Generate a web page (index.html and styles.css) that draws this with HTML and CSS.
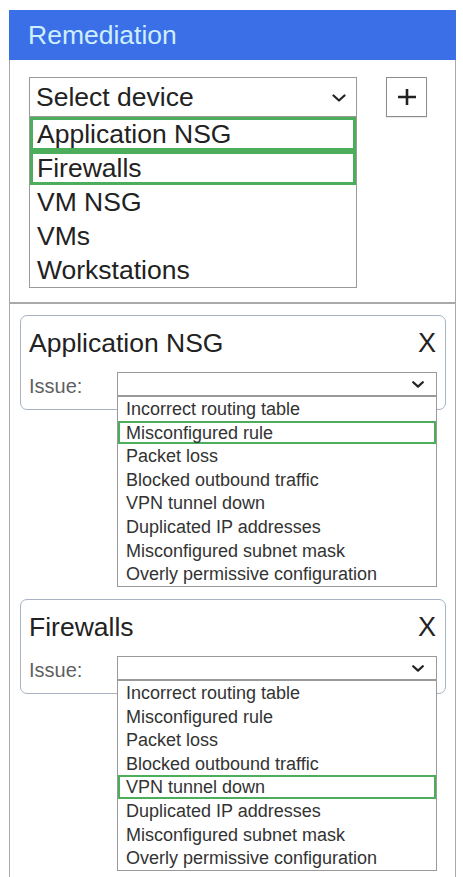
FILE: index.html
```html
<!DOCTYPE html>
<html>
<head>
<meta charset="utf-8">
<link rel="stylesheet" href="styles.css">
</head>
<body>
<div class="panel">
  <div class="header">Remediation</div>
  <div class="top">
    <div class="device">
      <div class="select-big">
        <span>Select device</span>
        <svg class="chev-big" width="14" height="8" viewBox="0 0 14 8"><path d="M1.5 1.5 L7 6.5 L12.5 1.5" fill="none" stroke="#222" stroke-width="2.2" stroke-linecap="round" stroke-linejoin="round"/></svg>
      </div>
      <ul class="listbox">
        <li class="hl">Application NSG</li>
        <li class="hl">Firewalls</li>
        <li>VM NSG</li>
        <li>VMs</li>
        <li>Workstations</li>
      </ul>
    </div>
    <div class="plus">
      <svg width="20" height="18" viewBox="0 0 20 18"><path d="M10 1 V17 M1 9 H19" fill="none" stroke="#222" stroke-width="2.6"/></svg>
    </div>
  </div>
  <div class="sep"></div>

  <div class="card">
    <div class="card-title"><span>Application NSG</span><span class="x">X</span></div>
    <div class="issue-row">
      <span class="label">Issue:</span>
      <div class="issue-select">
        <svg class="chev" width="12" height="7" viewBox="0 0 12 7"><path d="M1.2 1.2 L6 5.6 L10.8 1.2" fill="none" stroke="#222" stroke-width="2.2" stroke-linecap="round" stroke-linejoin="round"/></svg>
        <ul class="menu">
          <li>Incorrect routing table</li>
          <li class="hl">Misconfigured rule</li>
          <li>Packet loss</li>
          <li>Blocked outbound traffic</li>
          <li>VPN tunnel down</li>
          <li>Duplicated IP addresses</li>
          <li>Misconfigured subnet mask</li>
          <li>Overly permissive configuration</li>
        </ul>
      </div>
    </div>
  </div>

  <div class="card">
    <div class="card-title"><span>Firewalls</span><span class="x">X</span></div>
    <div class="issue-row">
      <span class="label">Issue:</span>
      <div class="issue-select">
        <svg class="chev" width="12" height="7" viewBox="0 0 12 7"><path d="M1.2 1.2 L6 5.6 L10.8 1.2" fill="none" stroke="#222" stroke-width="2.2" stroke-linecap="round" stroke-linejoin="round"/></svg>
        <ul class="menu">
          <li>Incorrect routing table</li>
          <li>Misconfigured rule</li>
          <li>Packet loss</li>
          <li>Blocked outbound traffic</li>
          <li class="hl">VPN tunnel down</li>
          <li>Duplicated IP addresses</li>
          <li>Misconfigured subnet mask</li>
          <li>Overly permissive configuration</li>
        </ul>
      </div>
    </div>
  </div>
</div>
</body>
</html>
```
FILE: styles.css
```css
* { box-sizing: border-box; }
html, body { margin: 0; padding: 0; background: #fff; }
body {
  padding: 10px 0 0 9px;
  font-family: "Liberation Sans", Arial, sans-serif;
  color: #222;
  overflow: hidden;
}
ul { list-style: none; margin: 0; padding: 0; }

.panel {
  width: 447px;
  border: 1px solid #a9a9a9;
  border-top: none;
  padding-bottom: 220px;
}
.header {
  height: 50px;
  background: #3b6fe8;
  color: #cdeefd;
  font-size: 26.5px;
  line-height: 50px;
  padding-left: 19px;
  margin: 0 -1px;
}
.top {
  display: flex;
  align-items: flex-start;
  gap: 29px;
  padding: 17px 0 14px 19px;
}
.device { width: 328px; }
.select-big {
  height: 40px;
  border: 1px solid #9a9a9a;
  display: flex;
  align-items: center;
  justify-content: space-between;
  padding: 0 10px 0 6px;
  font-size: 26.5px;
  color: #222;
  box-shadow: 0 1px 1px rgba(0,0,0,0.08);
}
.chev-big { margin-top: 2px; }
.listbox {
  border: 1px solid #9a9a9a;
  border-top: none;
  font-size: 26.5px;
  color: #222;
}
.listbox li {
  height: 34px;
  line-height: 28px;
  padding-left: 4px;
  border: 3px solid transparent;
}
.listbox li.hl { border-color: #4cae5a; }
.plus {
  width: 41px;
  height: 40px;
  border: 1px solid #8c8c8c;
  display: flex;
  align-items: center;
  justify-content: center;
  box-shadow: 0 1px 1px rgba(0,0,0,0.08);
}
.sep {
  border-top: 2px solid #a9a9a9;
}

.card {
  margin: 11px 9px 189px 10px;
  border: 1px solid #a8b4c3;
  border-radius: 7px;
  padding: 12px 8px 11px 8px;
}
.card + .card { margin-top: 0; margin-bottom: 0; }
.card-title {
  display: flex;
  justify-content: space-between;
  align-items: center;
  font-size: 26.5px;
  line-height: 30px;
  color: #222;
}
.card-title .x { font-size: 27px; padding-right: 1px; }
.issue-row {
  display: flex;
  align-items: flex-start;
  margin-top: 14px;
}
.label {
  width: 88px;
  font-size: 20px;
  line-height: 24px;
  padding-top: 2px;
  color: #5f5f5f;
}
.issue-select {
  position: relative;
  flex: 1;
  height: 24px;
  border: 1px solid #999;
  display: flex;
  align-items: center;
  justify-content: flex-end;
  padding-right: 12px;
  background: #fff;
}
.menu {
  position: absolute;
  top: 23px;
  left: -1px;
  right: -1px;
  background: #fff;
  border: 1px solid #999;
  font-size: 18px;
  color: #333;
  z-index: 2;
}
.menu li {
  height: 23.6px;
  line-height: 20px;
  padding-left: 6px;
  border: 2px solid transparent;
  white-space: nowrap;
}
.menu li.hl { border-color: #4cae5a; }
```
